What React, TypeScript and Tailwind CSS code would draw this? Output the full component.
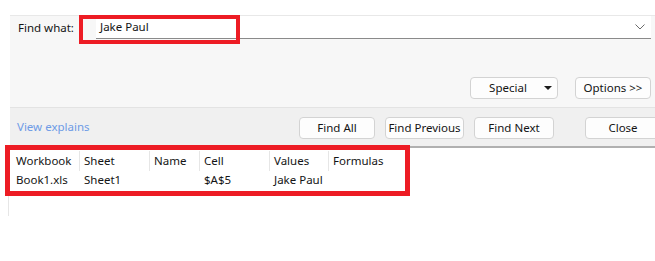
import { ReactNode } from 'react'

const font = { fontFamily: '"Segoe UI", "Noto Sans", "Liberation Sans", sans-serif' }

function Btn({ children, className = '' }: { children: ReactNode; className?: string }) {
  return (
    <div
      className={`h-[22px] flex items-center justify-center rounded-[4px] border border-[#d3d3d3] bg-[#fdfdfd] text-[11.5px] text-[#141414] ${className}`}
    >
      {children}
    </div>
  )
}

const cols = [
  { label: 'Workbook', w: 'w-[68px]', value: 'Book1.xls' },
  { label: 'Sheet', w: 'w-[70px]', value: 'Sheet1' },
  { label: 'Name', w: 'w-[50px]', value: '' },
  { label: 'Cell', w: 'w-[70px]', value: '$A$5' },
  { label: 'Values', w: 'w-[59px]', value: 'Jake Paul' },
  { label: 'Formulas', w: 'w-[80px]', value: '' },
]

export default function App() {
  return (
    <div className="relative w-[655px] h-[261px] overflow-hidden bg-white text-[#141414]" style={font}>
      <div className="pt-[15px] pl-[10px]">
        {/* Find what panel */}
        <div className="h-[93px] bg-[#f7f7f7] border-t border-[#e8e8e8] border-b border-b-[#e3e3e3] flex flex-col">
          <div className="flex items-center h-[23px]">
            <span className="ml-[8px] w-[78px] text-[11.5px]">Find what:</span>
            <div className="w-[555px] h-[23px] bg-white border-b border-[#8a8a8a] flex items-center pl-[4px] text-[11.5px]">
              <span className="flex-1">Jake Paul</span>
              <svg width="10" height="6" viewBox="0 0 10 6" className="mr-[6px]">
                <polyline points="0.5,0.5 5,5 9.5,0.5" fill="none" stroke="#6b6b6b" strokeWidth="1" />
              </svg>
            </div>
          </div>
          <div className="flex justify-end gap-[17px] mt-[38px] pr-[4px]">
            <Btn className="w-[88px] relative">
              <span className="mr-[12px]">Special</span>
              <svg width="8" height="4" viewBox="0 0 8 4" className="absolute right-[5px] top-[8px]">
                <polygon points="0,0 8,0 4,4" fill="#1b1b1b" />
              </svg>
            </Btn>
            <Btn className="w-[76px]">Options &gt;&gt;</Btn>
          </div>
        </div>

        {/* action row */}
        <div className="h-[40px] bg-[#f0f0f0] flex items-center border-b-2 border-[#b0b0b0]">
          <span className="ml-[7px] text-[11.5px] text-[#6e9be6]">View explains</span>
          <div className="ml-auto flex items-center gap-[10px] mt-[1px]">
            <Btn className="w-[76px]">Find All</Btn>
            <Btn className="w-[79px]">Find Previous</Btn>
            <Btn className="w-[80px]">Find Next</Btn>
            <Btn className="w-[76px] ml-[21px] -mr-[6px]">Close</Btn>
          </div>
        </div>
      </div>

      {/* results list */}
      <div className="ml-[8px] h-[68px] border-l border-[#e6e6e6] pl-[3px] text-[11.5px]">
        <div className="flex h-[23px] items-center pt-[3px]">
          {cols.map((c) => (
            <div key={c.label} className={`${c.w} h-[20px] flex items-center pl-[4px] border-r border-[#e6e6e6] last:border-r-0`}>
              {c.label}
            </div>
          ))}
        </div>
        <div className="flex h-[17px] items-center">
          {cols.map((c) => (
            <div key={c.label} className={`${c.w} pl-[4px]`}>
              {c.value}
            </div>
          ))}
        </div>
      </div>

      {/* red annotation boxes */}
      <div className="absolute left-[79px] top-[15px] w-[161px] h-[29px] border-[4px] border-[#ed1c24]" />
      <div className="absolute left-[5px] top-[145px] w-[405px] h-[51px] border-[5px] border-[#ed1c24]" />
    </div>
  )
}
